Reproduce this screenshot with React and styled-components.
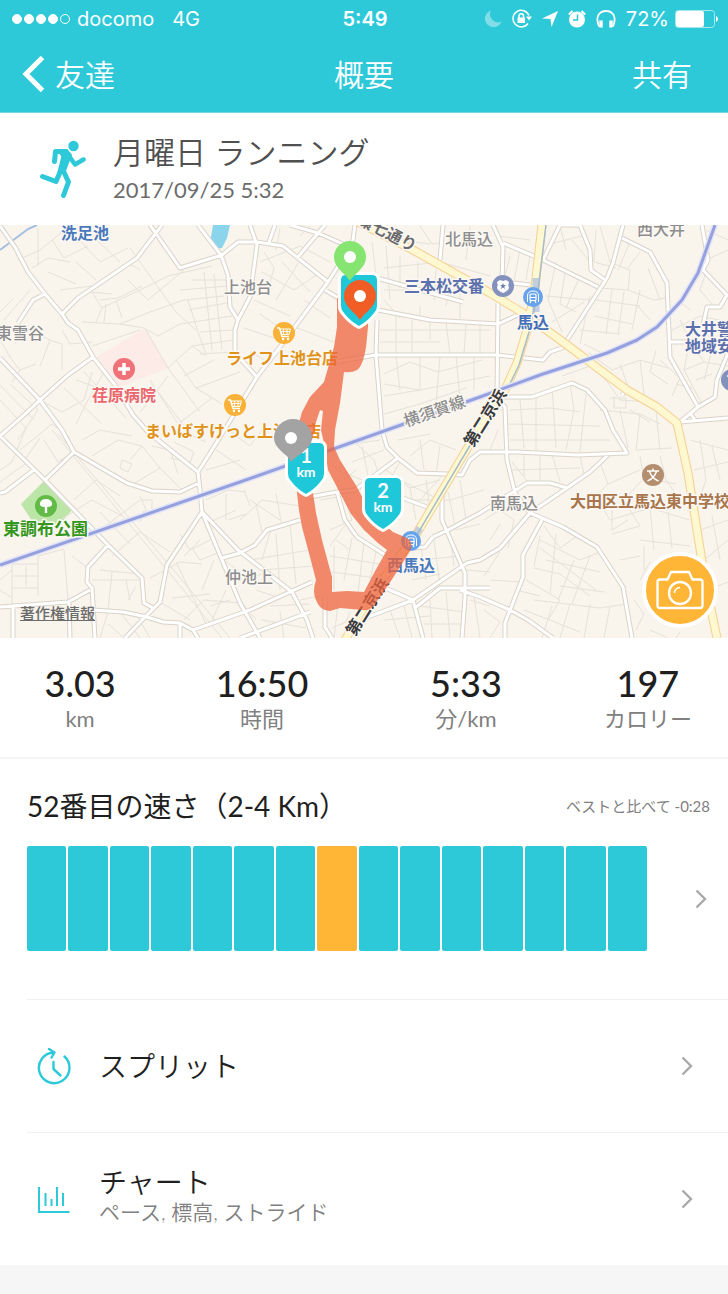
import styled, { createGlobalStyle } from 'styled-components';

const colors = {
  teal: '#2dc9d9',
  orange: '#ffb536',
  text: '#1f1f1f',
  grey: '#808080',
  line: '#f1f1f1',
};

const GlobalStyle = createGlobalStyle`
  * {
    box-sizing: border-box;
  }

  body {
    margin: 0;
    background-color: #f6f6f6;
    color: ${colors.text};
    font-family: Lato, 'Noto Sans CJK JP', sans-serif;
  }
`;

const Page = styled.div`
  display: flex;
  flex-direction: column;
  width: 100%;
`;

const Header = styled.header`
  background-color: ${colors.teal};
  color: #fff;
  border-bottom: 1px solid #6bdae5;
`;

const StatusBar = styled.div`
  display: grid;
  grid-template-columns: 1fr auto 1fr;
  align-items: center;
  height: 37px;
  padding: 0 10px 0 12px;
  font-family: Inter, 'Liberation Sans', sans-serif;
  font-size: 20px;
`;

const StatusLeft = styled.div`
  display: flex;
  align-items: center;
  gap: 18px;
`;

const Carrier = styled.div`
  display: flex;
  align-items: center;
  gap: 7px;
`;

const Signal = styled.div`
  display: flex;
  gap: 2px;
`;

const Dot = styled.span`
  width: 10px;
  height: 10px;
  border: 1px solid #fff;
  border-radius: 50%;
  background-color: ${(props) => (props.$on ? '#fff' : 'transparent')};
`;

const Time = styled.div`
  font-weight: 600;
`;

const StatusRight = styled.div`
  display: flex;
  justify-content: flex-end;
  align-items: center;
  gap: 10px;
`;

const Battery = styled.div`
  display: flex;
  align-items: center;
  gap: 6px;
`;

const Nav = styled.nav`
  display: grid;
  grid-template-columns: 1fr auto 1fr;
  align-items: center;
  height: 75px;
  padding: 0 22px 2px;
`;

const NavButton = styled.button`
  display: flex;
  align-items: center;
  justify-self: ${(props) => (props.$end ? 'end' : 'start')};
  gap: 10px;
  padding: ${(props) => (props.$end ? '0 14px' : '0')};
  border: none;
  background: none;
  color: inherit;
  font-family: inherit;
  font-size: 30px;
  font-weight: 350;
  line-height: 40px;
`;

const NavTitle = styled.h1`
  margin: 0;
  font-size: 30px;
  font-weight: 350;
  line-height: 40px;
`;

const Activity = styled.section`
  display: flex;
  align-items: center;
  gap: 27px;
  height: 112px;
  padding: 0 40px;
  background-color: #fff;
`;

const ActivityTitle = styled.h2`
  margin: 0;
  color: #505050;
  font-size: 31px;
  font-weight: 350;
  line-height: 42px;
`;

const ActivityDate = styled.div`
  color: #6c6c6c;
  font-size: 22px;
  line-height: 34px;
`;

const MapArea = styled.section`
  position: relative;
  background-color: #f9f4ec;
`;

const MapDrawing = styled.svg`
  display: block;
  width: 100%;
  height: auto;
`;

const LegalLink = styled.a`
  position: absolute;
  left: 20px;
  bottom: 14px;
  color: #6b6b6b;
  font-size: 15px;
  font-weight: 500;
  line-height: 22px;
`;

const CameraButton = styled.button`
  position: absolute;
  right: 10px;
  bottom: 10px;
  display: flex;
  align-items: center;
  justify-content: center;
  width: 76px;
  height: 76px;
  padding: 0;
  border: 4px solid #fff;
  border-radius: 50%;
  background-color: ${colors.orange};
`;

const Stats = styled.section`
  display: grid;
  grid-template-columns: 22fr 28fr 28fr 22fr;
  padding: 23px 0 24px;
  background-color: #fff;
  border-bottom: 2px solid #f6f6f6;
  text-align: center;
`;

const StatValue = styled.div`
  font-size: 36px;
  font-weight: 500;
  line-height: 44px;
`;

const StatLabel = styled.div`
  color: ${colors.grey};
  font-size: 22px;
  font-weight: 400;
  line-height: 28px;
`;

const Rank = styled.section`
  padding: 27px 18px 0 27px;
  background-color: #fff;
`;

const RankHead = styled.div`
  display: flex;
  justify-content: space-between;
  align-items: center;
`;

const RankTitle = styled.h3`
  margin: 0;
  font-size: 28px;
  font-weight: 400;
  line-height: 40px;
`;

const RankNote = styled.div`
  color: ${colors.grey};
  font-size: 15px;
  font-weight: 400;
  line-height: 20px;
`;

const RankLink = styled.a`
  display: flex;
  align-items: center;
  justify-content: space-between;
  gap: 48px;
  padding: 20px 3px 48px 0;
`;

const Bars = styled.div`
  display: flex;
  flex: 1;
  gap: 2px;
  height: 105px;
`;

const Bar = styled.span`
  flex: 1;
  border-radius: 2px;
  background-color: ${(props) => (props.$active ? colors.orange : colors.teal)};
`;

const List = styled.div`
  padding-left: 27px;
  background-color: #fff;
`;

const RowLink = styled.a`
  display: grid;
  grid-template-columns: 54px 1fr auto;
  align-items: center;
  gap: 18px;
  min-height: 133px;
  padding: 0 35px 0 0;
  border-top: 1px solid ${colors.line};
  color: inherit;
  text-decoration: none;
`;

const RowIcon = styled.span`
  display: flex;
  justify-content: center;
`;

const RowBody = styled.div`
  padding-bottom: 6px;
`;

const RowTitle = styled.div`
  font-size: 28px;
  font-weight: 350;
  line-height: 32px;
`;

const RowText = styled.div`
  color: ${colors.grey};
  font-size: 21px;
  font-weight: 350;
  line-height: 28px;
`;

const Footer = styled.footer`
  height: 27px;
  background-color: #f6f6f6;
`;

const Chevron = () => (
  <svg width="12" height="20" viewBox="0 0 12 20" fill="none" stroke="#a9a9a9" strokeWidth="2.400">
    <path d="M1.500 1.500L10 10L1.500 18.500" />
  </svg>
);

const Runner = () => (
  <svg width="46" height="58" viewBox="0 0 46 58" fill="none" stroke={colors.teal} strokeWidth="5" strokeLinecap="round" strokeLinejoin="round">
    <circle cx="33.500" cy="6" r="5.200" fill={colors.teal} stroke="none" />
    <path d="M14.500 21.500L15.500 11.500H26" />
    <path d="M29 16L35 24.500L43.500 19.500" strokeWidth="4.500" />
    <path d="M18 10.500H27L31 15L24.500 32H18.500L22.500 16Z" fill={colors.teal} strokeWidth="2" />
    <path d="M21 30L16 41.500L2.500 36.500" />
    <path d="M23 30L28.500 42L23.500 55.500" />
  </svg>
);

const Moon = () => (
  <svg width="17" height="17" viewBox="0 0 17 17" fill="#fff" opacity="0.4">
    <path d="M6 0.500A8.500 8.500 0 1 0 16.500 11.500A8 8 0 0 1 6 0.500Z" />
  </svg>
);

const RotationLock = () => (
  <svg width="20" height="19" viewBox="0 0 20 19" fill="none" stroke="#fff" strokeWidth="1.500">
    <path d="M17 6.500A8.300 8.300 0 1 0 16 14.500" />
    <path d="M14 7.500H20L17 11.500Z" fill="#fff" stroke="none" />
    <rect x="5.500" y="8.500" width="7.500" height="5.500" rx="0.500" fill="#fff" stroke="none" />
    <path d="M7 9V7A2.200 2.200 0 0 1 11.500 7V9" />
  </svg>
);

const Location = () => (
  <svg width="16" height="16" viewBox="0 0 16 16" fill="#fff">
    <path d="M16 0L9.500 16L8.500 8L0 7.500Z" />
  </svg>
);

const Alarm = () => (
  <svg width="18" height="18" viewBox="0 0 18 18" fill="none" stroke={colors.teal} strokeWidth="1.500">
    <circle cx="9" cy="9.500" r="8" fill="#fff" stroke="none" />
    <path d="M0.800 4.500L4.500 1M17.200 4.500L13.500 1" stroke="#fff" strokeWidth="2" />
    <path d="M9.500 4.500V10H5" />
  </svg>
);

const Headphones = () => (
  <svg width="20" height="18" viewBox="0 0 20 18" fill="none" stroke="#fff" strokeWidth="1.800">
    <path d="M3 16.500C-1 7 3 1 10 1S21 7 17 16.500" />
    <path d="M5 10.500V17.500M15 10.500V17.500" strokeWidth="3.400" />
  </svg>
);

const BatteryIcon = () => (
  <svg width="43" height="18" viewBox="0 0 43 18">
    <rect x="0.500" y="0.500" width="39" height="17" rx="3" fill="none" stroke="#a5e8ef" />
    <rect x="1" y="1" width="28" height="16" rx="2" fill="#fff" />
    <path d="M41 6V12Q43 11 43 9T41 6Z" fill="#fff" />
  </svg>
);

const Camera = () => (
  <svg width="48" height="40" viewBox="0 0 48 40" fill="none" stroke="#fff" strokeWidth="2.400" strokeLinejoin="round">
    <path d="M4 9.500H11.500L15 2H33L36.500 9.500H44Q46.500 9.500 46.500 12V35.500Q46.500 38 44 38H4Q1.500 38 1.500 35.500V12Q1.500 9.500 4 9.500Z" />
    <circle cx="24" cy="23" r="11" />
    <path d="M18.500 23A5.500 5.500 0 0 1 24 17.500" strokeWidth="1.500" />
  </svg>
);

const SplitIcon = () => (
  <svg width="36" height="38" viewBox="0 0 36 38" fill="none" stroke={colors.teal} strokeWidth="2.400" strokeLinecap="round" strokeLinejoin="round">
    <path d="M28.500 9.500A15.300 15.300 0 1 1 18 5.500" />
    <path d="M13 2L18.500 5.500L15.500 10.500" />
    <path d="M17.500 15V22L24.500 28.500" />
  </svg>
);

const ChartIcon = () => (
  <svg width="32" height="27" viewBox="0 0 32 27" fill="none" stroke={colors.teal} strokeWidth="2">
    <path d="M1 1V26H31.500" />
    <path d="M7.500 7V20M13.500 13V20M19 1V20M25 7V20" />
  </svg>
);

const minorStreets = [
  'M4 320L30 290M0 312L14 298M18 260L40 250L62 232M32 268L48 258L70 262M38 228V266M52 240L64 258L88 246M48 272L76 284M72 232L100 262L128 248M84 228L120 262M60 290L92 286M96 280L76 262',
  'M92 292L102 308L96 322M102 308L140 290L168 276L212 266M100 300L118 298L142 286M116 300L122 318M106 304L104 322M90 292L112 294M140 270L130 264M128 280L148 300L184 270M130 248L160 290L176 312L196 330',
  'M82 322L120 324L150 312L184 300L224 296M92 346L140 330M120 324L144 328L158 336M158 336L180 324L232 316M188 300L198 332L206 354M204 272L212 350M214 274L222 350M192 280H226M180 290L228 286M188 310L232 302M200 332L234 330',
  'M146 330L168 368L200 412M168 368L192 346L234 340M176 360L196 388L222 404M150 380L178 424M168 376L150 400L140 412M192 346L206 356M200 354L234 352M184 376L214 360M196 388L240 372M178 424L212 398M158 392L192 436L206 442',
  'M62 344V370M50 340L40 366M62 344L50 340M62 330L70 344L92 342M14 344L28 330L50 340M0 340L12 360L20 370L12 382M20 370L36 364M40 400L62 412L84 400L92 372M76 380L110 392M64 388L102 424M84 372L126 418M104 372L88 400L76 424',
  'M0 385L34 420M10 384L38 410L18 440M20 450L52 424L70 438M0 400L26 428L12 462L0 470M0 482L28 462M40 438L26 458M44 440L58 462L74 452M82 440L100 430L132 436M92 456L118 440L142 446M130 460L142 446L160 468L130 486M122 460L132 464L128 472L120 468Z',
  'M52 430L172 576L222 638M58 434L182 580L230 638M100 512L130 544M60 520L92 500L122 516M74 500L96 480L120 496M140 496L146 510L140 522M142 500H152V512H142M160 468L182 490M152 446L170 450L178 474M174 442L194 452L190 462L170 458',
  'M38 556V596M12 564V604M12 564H38M12 576H38M26 566V586M12 588H38M64 550L68 600M38 556L64 549M0 580L12 570M0 590L12 598M72 556L90 570M100 530L140 500M112 556L140 532L170 552M100 570L140 574M92 580L140 580M112 572L108 610M126 580L130 600',
  'M136 586L128 600M150 578L180 562L202 564M172 598L210 594M176 562L206 624M192 548L200 560L220 552M180 534L190 550L210 540M160 602L190 620M184 620L204 600L240 603M120 612L140 638M108 612L100 638M108 624L124 638M136 614L150 638',
  'M260 262L300 246L330 262M276 250L280 228M262 272L294 290L318 274M254 300L290 316M260 314L286 332M282 262L310 292M300 260L276 300M264 252L274 268L268 290M244 328L280 340M250 352L268 362M304 300L330 318M292 326L334 342M300 236L310 226',
  'M384 268L440 262L490 276M372 242L376 276M386 246L390 300M400 256V288M418 262V296M436 270L434 300M452 276L446 306M384 290L458 290M384 300L400 318M420 306V320M460 290V322M384 238L430 244M420 226L432 244L480 238M470 226L466 260',
  'M380 330H490M380 342H440M396 314V356M412 320V356M430 322V340M446 322L450 355M466 324L464 354M480 324V354M384 374L410 362L438 372L482 360M396 356L400 390M420 356V390L384 396M440 356L436 404M456 356L460 400M384 414L420 404L466 388M474 356V390M384 384L420 390L490 376',
  'M498 236L530 240M510 256L504 280M520 250L514 280M530 256L526 280M556 262L548 300L562 332M566 268L560 304M580 276L566 308M560 304L576 312M546 296L590 300M552 322L584 302M572 240L590 262M550 244L582 236M560 226L566 250M596 230L594 262L616 268',
  'M600 226L610 262M614 264L630 270L628 290L600 288M640 252L628 268M628 290L654 300M596 300L640 306M594 316L632 324M580 330L620 334M612 290L606 334M590 296L580 344M624 292L618 334M640 290L632 330M584 344L600 352M636 304L650 320M648 268L660 300',
  'M630 242L618 270M654 300L666 298M562 376L590 366L606 380M588 352L612 370L640 360L668 368M606 380L620 400L648 402M620 364L630 392M640 360L644 394M656 350L650 372L668 384M660 360L680 378L672 396M610 398H626V408H614V396M630 410L650 422',
  'M680 320L690 340L684 370L702 404M672 330L700 316L728 322M690 340L728 346M690 342L704 362L728 366M678 300L690 310M706 310L712 340M714 342L704 380M696 380L712 374M676 384L692 388M706 230L728 240M710 258L728 250M706 272L700 290L712 304M684 370L704 362',
  'M488 400V430M484 410H506M498 430L490 450M510 410L550 408L580 412M520 400L524 448M536 398V450M552 386L556 448M570 384L574 410L566 450M586 394L580 452M508 424L600 426M510 440H610M600 410L640 414L660 424M620 410L628 448M640 414L636 450L672 448M656 410L660 450',
  'M512 462L528 482M524 454V476M540 454V482M552 454L560 482M510 470L580 468M580 456L584 474M600 462L608 484L640 470M608 484L596 496L610 520M640 456L644 478L624 500M660 456L666 480L680 500M644 478L676 484M690 440L728 450M694 470L728 462M690 500L728 496M700 440L706 480L696 510',
  'M712 446L720 480M700 530L728 520M704 560L728 540M708 590L728 582M712 516L720 560M610 520L650 508L690 520M612 504V530L628 520M624 500L640 526L612 534M650 508L654 550M668 512L672 548M640 540L690 546M644 546V570M580 534L560 548L544 526M600 552L580 560L540 540',
  'M534 568L560 574L590 596M540 548L596 590M526 580L560 600L548 620M540 536L534 566M556 534L550 594M574 560L558 600M590 556L572 604M600 572L546 560M604 592L560 586M534 600L600 608L626 604M552 606L542 638M570 604L560 638M590 604L584 638M610 606L604 638M524 610L580 632',
  'M484 520L500 510L514 520L508 548M490 540L500 524M484 576L500 552M490 580L520 582M484 610L500 622L490 638M516 590L540 596M640 580L650 562M620 560L640 556M634 600L644 614L636 630M650 630L668 638M680 632L676 638',
  'M410 456L430 440L456 450M398 440L430 434M420 440L424 470M440 446L436 474M386 470L410 488L440 480M400 462L384 490M410 488L416 520M426 480L430 510M444 474L420 500M352 440L374 460L380 478M340 446L380 440M352 462L384 450M362 446L368 476M344 480L356 470M336 470L362 480',
  'M320 500L344 496L352 520L330 530M360 494L384 530M372 484L400 520M346 524L330 546M352 538L344 580M364 542L358 594M376 552L370 580M330 556L380 564M332 572L376 578M336 540L350 550M334 546V590M400 480L440 500M410 500H450L484 490M448 492L456 530L480 524M460 480L466 520',
  'M420 540L426 580M434 540L440 586M450 534L454 566M420 560L460 556M412 580L440 574M466 570L490 572M470 600L490 606M446 592L450 638M430 600L432 638M420 606L464 612M424 624L464 624M474 596L480 638M390 610L400 638M404 606L412 638M384 620L430 616M350 612L346 622',
  'M250 500L280 520M240 520L262 500L300 506M256 504L262 532M276 494L282 526M244 490L250 506M270 532L262 560M290 524L296 584M250 560L310 550M262 570L314 566M276 534L280 590M240 580L270 572M256 590L280 598M270 606L310 604M280 612L284 638M240 600L256 620M300 600L320 596M262 620L306 628M338 604L334 638M350 620L332 628',
  'M206 500L228 490L246 492M226 494V520M228 520L246 514M206 470L240 460M216 450L246 470M228 430L250 446L262 430M206 524L236 510M200 540L184 556M214 560L202 590M226 590L212 620M224 560L240 572M210 606L230 600',
];

const roads = [
  'M0 226L15 247L28 272L45 294L62 314L68 323L78 330L93 357L115 385L133 415L148 432L198 472L200 490L202 512',
  'M0 358L40 400L62 430L74 452L127 483L152 491L180 492L199 483',
  'M7 430L24 415L40 400L68 375L93 357M0 436L7 430',
  'M62 314L78 298L137 258L162 225',
  'M150 225L180 268L222 255L238 242H257L283 246L328 282',
  'M198 225L221 255L228 275L230 307L238 320L235 330V353L257 377',
  'M238 320L250 297L257 245L250 225',
  'M45 294L33 300L18 323',
  'M355 225L353 240L342 260L328 282L283 343L257 377L217 442L198 472',
  'M290 225L318 233L345 245M298 257L325 225M268 245L275 225M325 290L342 300',
  'M377 278L463 302M378 310L430 320L498 324L520 314',
  'M377 320L376 355L382 430L387 447L398 458L417 473L447 474L462 475L470 460L480 452H517L578 455L627 453L613 430L605 410L587 390L572 383L532 397H505',
  'M335 362L376 355H497L543 360L550 352L562 348L607 278L613 263L623 225',
  'M443 225L440 260M493 225L503 247L502 283M503 243L543 260L598 287M543 260L560 225H580L590 250L591 270L605 280M513 283L530 285',
  'M622 238L650 252L667 283L670 357L698 407L680 422M670 342H690M698 407L715 397L717 380L728 353M680 422L728 418M690 413L695 420M622 395L627 389',
  'M702 225L708 260L703 270L727 295L720 307H707L702 330M727 295H728',
  'M498 303L497 398L505 407L507 460L515 493L530 513L563 527L597 547L623 587L632 638',
  'M608 455L590 472L567 488L530 513L500 548L480 560L467 563L413 600L368 617',
  'M433 537L448 530L480 513L527 483H550L567 488M413 548L425 547L433 537',
  'M542 520L523 555V577L505 623V638M460 590L480 597L510 610L528 620L553 638',
  'M0 436L45 480L108 545L142 578L144 603L153 608M0 493L5 492L35 469M45 480L74 452',
  'M202 512L167 565L160 602L147 615L125 638',
  'M0 607L68 602L90 590M108 545L88 567L87 582L92 588L95 638M93 610L123 612L147 617L163 622L180 623L193 630L250 610L312 582',
  'M193 630L198 638M69 603L70 638M13 607V638M180 623V638M202 512L240 603L260 638M202 512L238 550L292 592L307 620L313 638M240 638L310 612',
  'M222 558L240 553L255 545L267 530L300 520M325 597V627L332 638',
  'M310 497L337 492L355 490L398 458M337 492L345 520L357 537L385 555M400 497L427 507M383 587L413 600L423 638M415 608L440 588H490',
  'M442 493V520L465 573V597L462 638',
];

const highways = [
  'M358 222L413 250L490 293L523 313L563 342L627 390L657 407L677 423L688 473L697 530L705 580L717 638',
  'M542 225L535 287L527 330L517 363L505 390L480 427L417 533L370 597L345 640',
];

// outer edge of the run followed by the area it encloses
const route = [
  'M337 298V327L334 347L324 382L310 397L302 412L299 423L295 460L297 493L299 510L302 527L310 557L316 580Q312 592 316 600Q320 611 330 611L340 608L363 610Q371 611 375 604L385 590L400 567L410 551Q414 542 407 538L393 532L370 513L357 487L340 460L334 447L335 430L340 403L344 372Q352 373 357 370Q363 366 366 347L368 327V298Z',
  'M320 410L316 422L312 440L313 493L316 513L322 540L332 577V592L347 591L364 592L374 573L387 550L378 543L364 530L351 514L340 493L328 470L324 443L321 430L323 411Z',
].join('');

const Label = styled.text`
  fill: ${(props) => props.$color};
  stroke: #fbf8f3;
  stroke-width: 3px;
  stroke-linejoin: round;
  paint-order: stroke;
  font-family: 'Noto Sans CJK JP', sans-serif;
  font-size: ${(props) => props.$size || 16}px;
  font-weight: ${(props) => props.$weight || 700};
`;

const ShieldText = styled.text`
  fill: #fff;
  font-family: Lato, sans-serif;
  font-size: ${(props) => props.$size}px;
  font-weight: 700;
  text-anchor: middle;
`;

const labels = [
  { x: 61, y: 239, text: '洗足池', color: '#4a79bd' },
  { x: 224, y: 293, text: '上池台', color: '#8d8d8d', weight: 500 },
  { x: -4, y: 339, text: '東雪谷', color: '#8d8d8d', weight: 500 },
  { x: 445, y: 245, text: '北馬込', color: '#8d8d8d', weight: 500 },
  { x: 637, y: 235, text: '西大井', color: '#8d8d8d', weight: 500 },
  { x: 404, y: 292, text: '三本松交番', color: '#5b70ad' },
  { x: 517, y: 328, text: '馬込', color: '#4470b5' },
  { x: 685, y: 335, text: '大井警察', color: '#5b70ad' },
  { x: 685, y: 352, text: '地域安全', color: '#5b70ad' },
  { x: 92, y: 401, text: '荏原病院', color: '#eb676d' },
  { x: 226, y: 364, text: 'ライフ上池台店', color: '#e0931a' },
  { x: 145, y: 437, text: 'まいばすけっと上池台店', color: '#e0931a' },
  { x: 3, y: 535, text: '東調布公園', color: '#35961d', size: 17 },
  { x: 225, y: 583, text: '仲池上', color: '#8d8d8d', weight: 500 },
  { x: 490, y: 509, text: '南馬込', color: '#8d8d8d', weight: 500 },
  { x: 570, y: 507, text: '大田区立馬込東中学校', color: '#a8754c' },
  { x: 387, y: 571, text: '西馬込', color: '#4a79bd' },
];

const Shield = ({ x, y, km }) => (
  <g transform={`translate(${x} ${y})`}>
    <path
      d="M5 0H31Q36 0 36 5V31Q36 35 33 38Q27 46 18 51Q9 46 3 38Q0 35 0 31V5Q0 0 5 0Z"
      fill="#1fc8d8"
      stroke="#fff"
      strokeWidth="6"
      paintOrder="stroke"
      strokeLinejoin="round"
    />
    {km && (
      <>
        <ShieldText x="18" y="20" $size={20}>{km}</ShieldText>
        <ShieldText x="18" y="34" $size={14}>km</ShieldText>
      </>
    )}
  </g>
);

const Pin = ({ x, y, r = 16, tip = 0, color }) => (
  <g transform={`translate(${x} ${y})`}>
    <path
      d={`M${tip} 24C-4 17 ${-r} 11 ${-r} 0A${r} ${r} 0 0 1 ${r} 0C${r} 11 4 17 ${tip} 24Z`}
      fill={color}
    />
    <circle cx={tip} r="6" fill="#fff" />
  </g>
);

const Badge = ({ x, y, color, r = 11, children }) => (
  <g transform={`translate(${x} ${y})`} fill="none" stroke="#fff" strokeWidth="1.500">
    <circle r={r} fill={color} stroke="none" />
    {children}
  </g>
);

const Cart = () => (
  <>
    <path d="M-7 -5H-4.500L-2 3.500H5" />
    <path d="M-4 -4H6.500L5 1.500H-2.500ZM-3.500 -1.500H6M-0.500 -4V1.500M3 -4V1.500" strokeWidth="1" />
    <circle cx="-1" cy="6" r="1.200" fill="#fff" stroke="none" />
    <circle cx="4" cy="6" r="1.200" fill="#fff" stroke="none" />
  </>
);

const Train = () => (
  <>
    <path d="M-5.500 5V-1Q-5.500 -6 0 -6T5.500 -1V5" strokeWidth="1" />
    <rect x="-3" y="-3" width="6" height="6.500" rx="1" strokeWidth="1.200" />
    <path d="M-3 0.500H3M-2 4L-3 6M2 4L3 6" strokeWidth="1.200" />
  </>
);

const RunMap = () => (
  <MapDrawing viewBox="0 225 728 413" role="img" aria-label="ランニングの地図">
    <rect x="0" y="225" width="728" height="413" fill="#f9f4ec" />
    <path d="M213 225H230L227 238L222 248L213 249L210 243Z" fill="#8ad4ec" />
    <path d="M145 328L168 368L120 387L97 357Z" fill="#fcebe7" />
    <path d="M44 481L72 510L60 524H34L21 504Z" fill="#bce6a8" />
    <path d="M0 250L28 229L37 225" fill="none" stroke="#a3bfe2" strokeWidth="2" />
    <path d={minorStreets.join('')} fill="none" stroke="#e4e2da" strokeWidth="1" />
    <g fill="none" strokeLinejoin="round">
      <path d={roads.join('')} stroke="#dad3ca" strokeWidth="5" />
      <path d={roads.join('')} stroke="#fff" strokeWidth="3" />
      <path d={highways.join('')} stroke="#f6d092" strokeWidth="9" />
      <path d={highways.join('')} stroke="#fdf8cf" strokeWidth="7" />
      <path d="M546 225L538 290L529 332L519 365L507 390M478 432L415 538" stroke="#a6bccb" strokeWidth="1.500" />
      <path d="M536 278V312M420 528L412 540" stroke="#9fb5e0" strokeWidth="7" opacity="0.600" />
      <path d="M0 565L240 482L480 397L540 375L607 353L637 340L657 327L682 300L698 273L715 225" stroke="#e3e4f6" strokeWidth="6" />
      <path d="M0 565L240 482L480 397L540 375L607 353L637 340L657 327L682 300L698 273L715 225" stroke="#95a0df" strokeWidth="3" />
    </g>

    <Badge x={284} y={333} color="#f9b237"><Cart /></Badge>
    <Badge x={235} y={405} color="#f9b237"><Cart /></Badge>
    <Badge x={124} y={369} color="#f07177">
      <path d="M0 -6V6M-6 0H6" strokeWidth="3.500" />
    </Badge>
    <Badge x={46} y={506} color="#62ba47">
      <path d="M-1.200 7V1Q-7 1 -6 -3Q-5 -7 0 -7T6 -3Q7 1 1.200 1V7Z" fill="#fff" stroke="none" />
    </Badge>
    <Badge x={503} y={286} color="#8391bd">
      <path d="M-6 -4L-3 -6L0 -5L3 -6L6 -4Q4.500 -1 6 2Q5 5 0 7Q-5 5 -6 2Q-4.500 -1 -6 -4Z" fill="#fff" stroke="none" />
      <path d="M0 -3L0.800 -1L3 -0.800L1.300 0.600L2 3L0 1.600L-2 3L-1.300 0.600L-3 -0.800L-0.800 -1Z" fill="#6d7dae" stroke="none" />
    </Badge>
    <Badge x={533} y={297} color="#66a3ec" r={10}><Train /></Badge>
    <Badge x={411} y={541} color="#66a3ec" r={10}><Train /></Badge>
    <Badge x={653} y={475} color="#b38f70">
      <path d="M0 -6.500V-4M-6 -4H6M-3.500 -3.500Q-1 3.500 5.500 6M3.500 -3.500Q1 3.500 -5.500 6" />
    </Badge>
    <Badge x={732} y={380} color="#8391bd">
      <path d="M-5 -4H4M-3 -3V5" />
    </Badge>

    {labels.map((label) => (
      <Label key={label.text} x={label.x} y={label.y} $color={label.color} $weight={label.weight} $size={label.size}>
        {label.text}
      </Label>
    ))}
    <Label transform="translate(356 223) rotate(27)" $color="#6b6b6b">環七通り</Label>
    <Label transform="translate(406 427) rotate(-19)" $color="#8d8d8d" $weight={500}>横須賀線</Label>
    <Label transform="translate(473 448) rotate(-58)" $color="#3b3b3b">第二京浜</Label>
    <Label transform="translate(355 637) rotate(-58)" $color="#3b3b3b">第二京浜</Label>

    <path d={route} fill="rgba(238, 98, 60, 0.74)" fillRule="evenodd" />
    <Shield x={341} y={275} />
    <Shield x={288} y={443} km="1" />
    <Shield x={365} y={478} km="2" />
    <Pin x={350} y={257} color="#86e571" />
    <Pin x={360} y={296} color="#f15d25" />
    <Pin x={293} y={438} r={19} tip={-2} color="#a3a3a3" />
  </MapDrawing>
);

const stats = [
  { value: '3.03', label: 'km' },
  { value: '16:50', label: '時間' },
  { value: '5:33', label: '分/km' },
  { value: '197', label: 'カロリー' },
];

const BAR_COUNT = 15;
const ACTIVE_BAR = 7;

const App = () => {
  return (
    <Page lang="ja">
      <GlobalStyle />
      <Header>
        <StatusBar>
          <StatusLeft>
            <Carrier>
              <Signal>
                {[1, 2, 3, 4, 5].map((n) => (
                  <Dot key={n} $on={n < 5} />
                ))}
              </Signal>
              docomo
            </Carrier>
            <span>4G</span>
          </StatusLeft>
          <Time>5:49</Time>
          <StatusRight>
            <Moon />
            <RotationLock />
            <Location />
            <Alarm />
            <Headphones />
            <Battery>
              72%
              <BatteryIcon />
            </Battery>
          </StatusRight>
        </StatusBar>
        <Nav>
          <NavButton>
            <svg width="23" height="38" viewBox="0 0 23 38" fill="none" stroke="#fff" strokeWidth="5">
              <path d="M20.500 2.500L4 19L20.500 35.500" />
            </svg>
            友達
          </NavButton>
          <NavTitle>概要</NavTitle>
          <NavButton $end>共有</NavButton>
        </Nav>
      </Header>

      <Activity>
        <Runner />
        <div>
          <ActivityTitle>月曜日 ランニング</ActivityTitle>
          <ActivityDate>2017/09/25 5:32</ActivityDate>
        </div>
      </Activity>

      <MapArea>
        <RunMap />
        <LegalLink href="#legal">著作権情報</LegalLink>
        <CameraButton aria-label="写真を追加">
          <Camera />
        </CameraButton>
      </MapArea>

      <Stats>
        {stats.map((stat) => (
          <div key={stat.label}>
            <StatValue>{stat.value}</StatValue>
            <StatLabel>{stat.label}</StatLabel>
          </div>
        ))}
      </Stats>

      <Rank>
        <RankHead>
          <RankTitle>52番目の速さ（2-4 Km）</RankTitle>
          <RankNote>ベストと比べて -0:28</RankNote>
        </RankHead>
        <RankLink href="#rank" aria-label="52番目の速さ">
          <Bars>
            {Array.from({ length: BAR_COUNT }, (_, i) => (
              <Bar key={i} $active={i === ACTIVE_BAR} />
            ))}
          </Bars>
          <Chevron />
        </RankLink>
      </Rank>

      <List>
        <RowLink href="#splits">
          <RowIcon>
            <SplitIcon />
          </RowIcon>
          <RowTitle>スプリット</RowTitle>
          <Chevron />
        </RowLink>
        <RowLink href="#charts">
          <RowIcon>
            <ChartIcon />
          </RowIcon>
          <RowBody>
            <RowTitle>チャート</RowTitle>
            <RowText>ペース, 標高, ストライド</RowText>
          </RowBody>
          <Chevron />
        </RowLink>
      </List>
      <Footer />
    </Page>
  );
};

export default App;
